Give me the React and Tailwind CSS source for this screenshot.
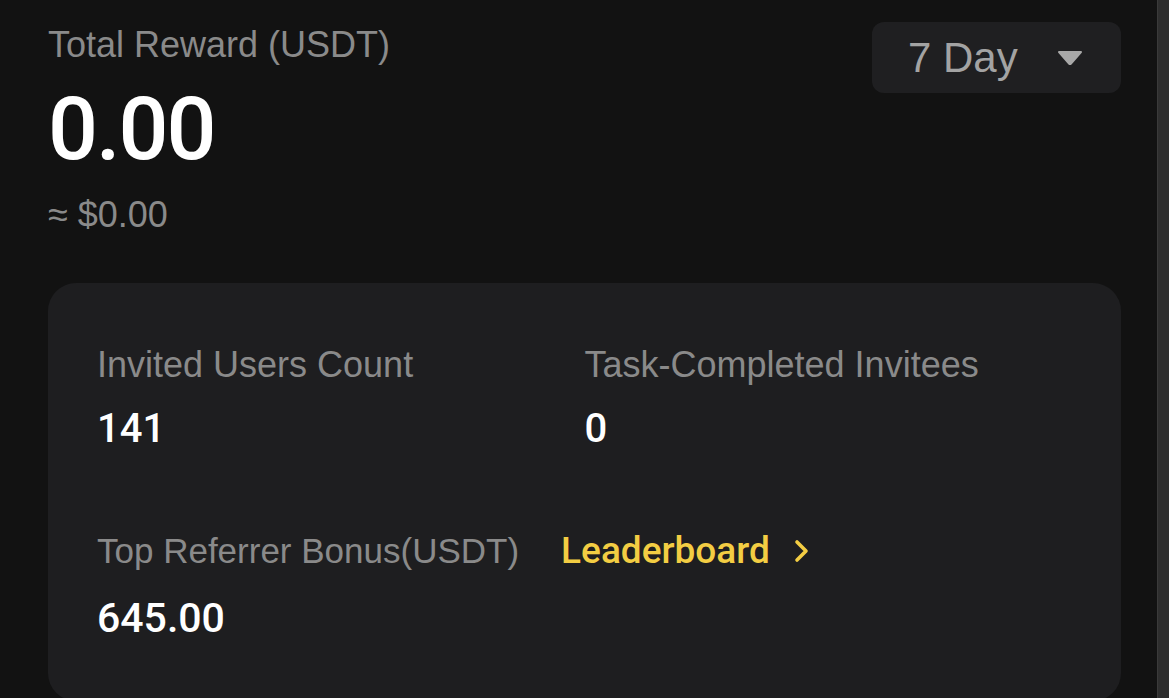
import React from 'react';

const stats = [
  { label: 'Invited Users Count', value: '141' },
  { label: 'Task-Completed Invitees', value: '0' },
];

const App = () => {
  return (
    <div className="flex h-[698px] w-[1169px] overflow-hidden bg-[#121212] font-['Liberation_Sans',Arial,sans-serif]">
      <div className="flex-1 pl-[48px] pr-[36px]">
        {/* header: total reward + period picker */}
        <div className="flex items-start justify-between pt-[22px]">
          <div>
            <div className="text-[36px] leading-[46px] text-[#8a8a8a]">Total Reward (USDT)</div>
            <div className="mt-[17px] font-['Roboto',sans-serif] text-[88px] font-medium leading-[88px] tracking-[-2px] text-white">
              0.00
            </div>
            <div className="mt-[20px] text-[36px] leading-[44px] text-[#8a8a8a]">≈ $0.00</div>
          </div>
          <button className="flex h-[71px] w-[249px] items-center justify-between rounded-[12px] bg-[#1f1f21] pl-[36px] pr-[38px]">
            <span className="text-[42px] leading-none text-[#a3a3a3]">7 Day</span>
            <svg width="26" height="16" viewBox="0 0 26 16">
              <path d="M2 2 H24 L14 13.5 Q13 14.6 12 13.5 Z" fill="#a8a8a8" stroke="#a8a8a8" strokeWidth="2" strokeLinejoin="round" />
            </svg>
          </button>
        </div>

        {/* stats card */}
        <div className="mt-[46px] h-[418px] rounded-[28px] bg-[#1e1e20] px-[49px] pt-[60px]">
          <div className="grid grid-cols-2">
            {stats.map((s) => (
              <div key={s.label}>
                <div className="text-[36px] leading-[44px] text-[#8a8a8a]">{s.label}</div>
                <div className="mt-[18px] font-['Roboto',sans-serif] text-[40px] font-medium leading-[48px] text-white">
                  {s.value}
                </div>
              </div>
            ))}
          </div>

          <div className="mt-[76px]">
            <div className="flex items-center">
              <span className="text-[35px] leading-[44px] text-[#8a8a8a]">Top Referrer Bonus(USDT)</span>
              <a className="ml-[42px] flex items-center gap-[24px] text-[#f3cd43]">
                <span className="font-['Roboto',sans-serif] text-[37px] font-medium leading-[44px]">Leaderboard</span>
                <svg width="16" height="24" viewBox="0 0 16 24">
                  <path d="M3 3 L12 12 L3 21" fill="none" stroke="#f3cd43" strokeWidth="3.6" strokeLinecap="round" strokeLinejoin="round" />
                </svg>
              </a>
            </div>
            <div className="mt-[21px] font-['Roboto',sans-serif] text-[41px] font-medium leading-[48px] text-white">
              645.00
            </div>
          </div>
        </div>
      </div>
      <div className="w-[12px] border-l border-[#3a3a3a] bg-[#2e2e2e]" />
    </div>
  );
};

export default App;
